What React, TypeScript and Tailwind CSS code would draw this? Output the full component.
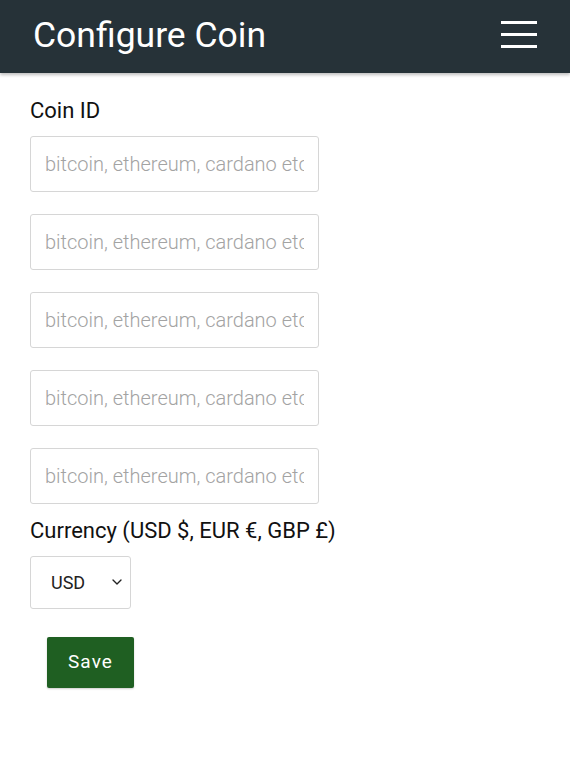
import { ChevronDown } from "lucide-react";

const font = { fontFamily: "Roboto, 'Noto Sans', sans-serif" };

const CoinInput = () => (
  <input
    type="text"
    placeholder="bitcoin, ethereum, cardano etc"
    className="w-[289px] h-[56px] border border-[#d6d6d6] rounded-[3px] px-[14px] text-[20px] font-light text-[#333] placeholder:text-[#a3a3a3] outline-none bg-white"
  />
);

export default function App() {
  return (
    <div className="min-h-[770px] bg-white" style={font}>
      <header className="h-[73px] bg-[#263238] flex items-center justify-between pl-[33px] pr-[33px] shadow-[0_2px_3px_rgba(0,0,0,0.25)]">
        <h1 className="text-white text-[35.5px] font-normal leading-none pb-[2px]">
          Configure Coin
        </h1>
        <button className="flex flex-col gap-[9px] w-[36px] pb-[4px]">
          <span className="block h-[3px] bg-white" />
          <span className="block h-[3px] bg-white" />
          <span className="block h-[3px] bg-white" />
        </button>
      </header>

      <div className="px-[30px] pt-[27px] flex flex-col">
        <label className="text-[22px] text-[#111] leading-none mb-[14px]">
          Coin ID
        </label>
        <div className="flex flex-col gap-[22px]">
          <CoinInput />
          <CoinInput />
          <CoinInput />
          <CoinInput />
          <CoinInput />
        </div>

        <label className="text-[22px] text-[#111] leading-none mt-[16px] mb-[14px]">
          Currency (USD $, EUR €, GBP £)
        </label>
        <div className="relative w-[101px] h-[53px]">
          <select className="appearance-none w-full h-full border border-[#d6d6d6] rounded-[3px] bg-white pl-[20px] text-[18px] text-[#222] outline-none">
            <option>USD</option>
            <option>EUR</option>
            <option>GBP</option>
          </select>
          <ChevronDown
            size={16}
            strokeWidth={2}
            className="absolute right-[6px] top-[18px] text-[#222] pointer-events-none"
          />
        </div>

        <div className="pl-[17px] pt-[28px]">
          <button className="w-[87px] h-[51px] bg-[#1f5f22] rounded-[2px] text-white text-[19px] tracking-[0.06em] shadow-[0_1px_2px_rgba(0,0,0,0.2)]">
            Save
          </button>
        </div>
      </div>
    </div>
  );
}
